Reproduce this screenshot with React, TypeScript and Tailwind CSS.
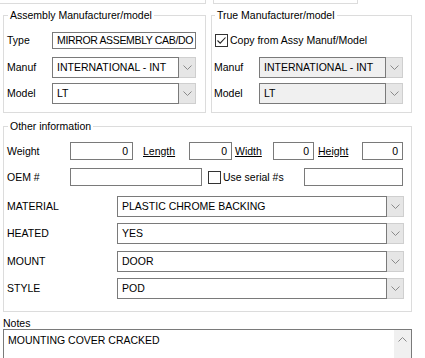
import React from "react";

function Chevron({ up = false }: { up?: boolean }) {
  return (
    <svg width="9" height="5" viewBox="0 0 9 5">
      <path
        d={up ? "M0.5 4.5 L4.5 0.5 L8.5 4.5" : "M0.5 0.5 L4.5 4.5 L8.5 0.5"}
        fill="none"
        stroke="#8a8a8a"
        strokeWidth="1"
      />
    </svg>
  );
}

function Combo({ value, width, disabled }: { value: string; width: string; disabled?: boolean }) {
  return (
    <div className={`flex h-[21px] ${width}`}>
      <div
        className={`flex flex-1 items-center overflow-hidden whitespace-nowrap border border-[#7a7a7a] pl-[4px] ${
          disabled ? "bg-[#f0f0f0]" : "bg-white"
        }`}
      >
        {value}
      </div>
      <div className="flex w-[17px] items-center justify-center border border-l-0 border-[#cfcfcf] bg-[#e6e6e6]">
        <Chevron />
      </div>
    </div>
  );
}

function TextBox({ value = "", width, right }: { value?: string; width: string; right?: boolean }) {
  return (
    <div
      className={`flex h-[18px] items-center overflow-hidden whitespace-nowrap border border-[#7a7a7a] bg-white px-[4px] ${width} ${
        right ? "justify-end" : ""
      }`}
    >
      {value}
    </div>
  );
}

function CheckBox({ checked }: { checked?: boolean }) {
  return (
    <div className="flex h-[13px] w-[13px] shrink-0 items-center justify-center border border-[#333333] bg-white">
      {checked && (
        <svg width="11" height="11" viewBox="0 0 11 11">
          <path d="M1.5 5.5 L4.2 8.2 L9.5 2.5" fill="none" stroke="#222" strokeWidth="1.1" />
        </svg>
      )}
    </div>
  );
}

function Legend({ children }: { children: React.ReactNode }) {
  return <legend className="ml-[1px] px-[2px] leading-[14px]">{children}</legend>;
}

export default function App() {
  const attrs = [
    { label: "MATERIAL", value: "PLASTIC CHROME BACKING", gap: "mt-[10px]" },
    { label: "HEATED", value: "YES", gap: "mt-[6px]" },
    { label: "MOUNT", value: "DOOR", gap: "mt-[7px]" },
    { label: "STYLE", value: "POD", gap: "mt-[6px]" },
  ];

  return (
    <div className="h-[358px] w-[425px] overflow-hidden bg-white font-['Liberation_Sans',Arial,sans-serif] text-[10.5px] leading-[13px] text-black">
      {/* bottom edges of the panels above */}
      <div className="flex h-[4px]">
        <div className="w-[206px] border-b border-r border-[#dcdcdc]" />
        <div className="ml-[7px] w-[145px] border-b border-l border-r border-[#dcdcdc]" />
      </div>

      <div className="mt-[4px] flex">
        <fieldset className="ml-[3px] w-[203px] border border-[#dcdcdc] pb-[8px] pl-[3px] pr-[8px]">
          <Legend>Assembly Manufacturer/model</Legend>
          <div className="mt-[10px] flex items-center">
            <span className="w-[45px]">Type</span>
            <div className="flex h-[17px] w-[144px] items-center overflow-hidden whitespace-nowrap border border-[#7a7a7a] bg-white pl-[4px] tracking-[-0.35px]">
              MIRROR ASSEMBLY CAB/DO
            </div>
          </div>
          <div className="mt-[8px] flex items-center">
            <span className="w-[45px]">Manuf</span>
            <Combo value="INTERNATIONAL - INT" width="w-[144px]" />
          </div>
          <div className="mt-[5px] flex items-center">
            <span className="w-[45px]">Model</span>
            <Combo value="LT" width="w-[144px]" />
          </div>
        </fieldset>

        <fieldset className="ml-[5px] w-[201px] border border-[#dcdcdc] pb-[8px] pl-[2px] pr-[7px]">
          <Legend>True Manufacturer/model</Legend>
          <div className="mt-[10px] flex h-[17px] items-center pl-[1px]">
            <CheckBox checked />
            <span className="ml-[2px]">Copy from Assy Manuf/Model</span>
          </div>
          <div className="mt-[8px] flex items-center">
            <span className="w-[45px]">Manuf</span>
            <Combo value="INTERNATIONAL - INT" width="w-[144px]" disabled />
          </div>
          <div className="mt-[5px] flex items-center">
            <span className="w-[45px]">Model</span>
            <Combo value="LT" width="w-[144px]" disabled />
          </div>
        </fieldset>
      </div>

      <fieldset className="ml-[3px] mt-[6px] w-[409px] border border-[#dcdcdc] pb-[12px] pl-[3px]">
        <Legend>Other information</Legend>
        <div className="mt-[9px] flex items-center">
          <span className="w-[63px]">Weight</span>
          <TextBox value="0" width="w-[63px]" right />
          <span className="w-[56px] pl-[10px] underline">Length</span>
          <TextBox value="0" width="w-[43px]" right />
          <span className="w-[41px] pl-[3px] underline">Width</span>
          <TextBox value="0" width="w-[41px]" right />
          <span className="w-[48px] pl-[4px] underline">Height</span>
          <TextBox value="0" width="w-[41px]" right />
        </div>
        <div className="mt-[8px] flex items-center">
          <span className="w-[63px]">OEM #</span>
          <TextBox width="w-[132px]" />
          <div className="ml-[6px] flex w-[96px] items-center">
            <CheckBox />
            <span className="ml-[2px]">Use serial #s</span>
          </div>
          <TextBox width="w-[99px]" />
        </div>
        {attrs.map((a) => (
          <div key={a.label} className={`${a.gap} flex items-center`}>
            <span className="w-[110px]">{a.label}</span>
            <Combo value={a.value} width="w-[287px]" />
          </div>
        ))}
      </fieldset>

      <div className="ml-[3px] mt-[5px] leading-[12px]">Notes</div>
      <div className="ml-[3px] flex h-[40px] w-[409px] border border-[#7a7a7a] bg-white">
        <div className="flex-1 pl-[4px] pt-[4px]">MOUNTING COVER CRACKED</div>
        <div className="flex w-[17px] justify-center bg-[#f0f0f0] pt-[7px]">
          <Chevron up />
        </div>
      </div>
    </div>
  );
}
